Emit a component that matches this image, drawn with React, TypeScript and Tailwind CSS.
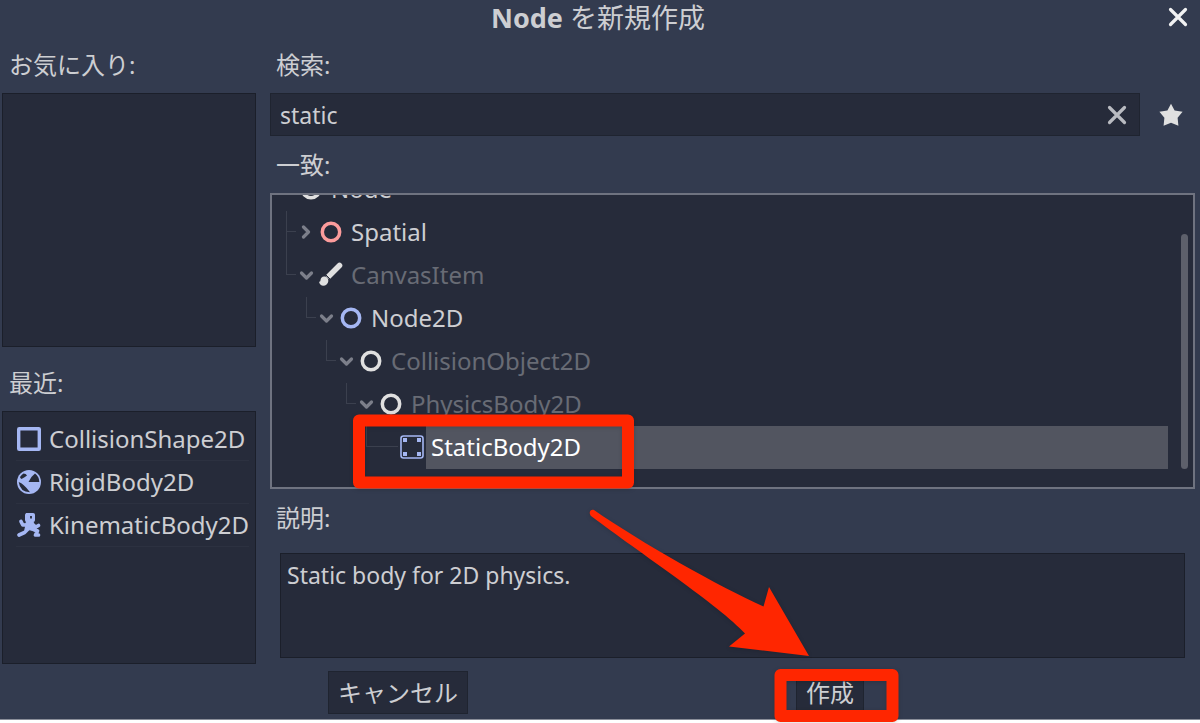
import React, { useState } from 'react';

type IconName = 'node' | 'spatial' | 'node2d' | 'brush' | 'static' | 'shape' | 'rigid' | 'kinematic';

interface TreeNode {
  name: string;
  icon: IconName;
  depth: number;
  arrow?: 'open' | 'closed';
  disabled?: boolean;
  hasSibling?: boolean;
}

const NODES: TreeNode[] = [
  { name: 'Spatial', icon: 'spatial', depth: 1, arrow: 'closed', hasSibling: true },
  { name: 'CanvasItem', icon: 'brush', depth: 1, arrow: 'open', disabled: true },
  { name: 'Node2D', icon: 'node2d', depth: 2, arrow: 'open' },
  { name: 'CollisionObject2D', icon: 'node', depth: 3, arrow: 'open', disabled: true },
  { name: 'PhysicsBody2D', icon: 'node', depth: 4, arrow: 'open', disabled: true },
  { name: 'StaticBody2D', icon: 'static', depth: 5 },
];

const RECENT: { name: string; icon: IconName }[] = [
  { name: 'CollisionShape2D', icon: 'shape' },
  { name: 'RigidBody2D', icon: 'rigid' },
  { name: 'KinematicBody2D', icon: 'kinematic' },
];

const NodeIcon: React.FC<{ name: IconName }> = ({ name }) => (
  <svg viewBox="0 0 24 24" className="w-6 h-6 shrink-0 overflow-visible" fill="none" aria-hidden="true">
    {name === 'node' && <circle cx="11" cy="11" r="8.7" stroke="#e0e0e0" strokeWidth="3.500" />}
    {name === 'spatial' && <circle cx="11" cy="11" r="8.7" stroke="#fc9c9c" strokeWidth="3.500" />}
    {name === 'node2d' && <circle cx="11" cy="11" r="8.7" stroke="#a5b7f3" strokeWidth="3.500" />}
    {name === 'brush' && (
      <>
        <path d="M8.500 12.500L19.500 1.500" stroke="#e0e0e0" strokeWidth="5.600" strokeLinecap="round" />
        <path d="M2.500 13.500l6 6" stroke="#262b3a" strokeWidth="7" />
        <path d="M4 12.500c2.700 0 4.600 2 4.300 4.700-.3 2.600-2.500 4.500-5.100 4.500-1.800 0-3.700-1-4.200-3.900 1.300.3 1.400-.6 1.500-1.700.4-2.200 1.600-3.600 3.500-3.600z" fill="#e0e0e0" />
        <path d="M5.500 10.500l5 5" stroke="#262b3a" strokeWidth="1" />
      </>
    )}
    {name === 'static' && (
      <>
        <rect x="1" y="0" width="22" height="22" rx="2.500" stroke="#a5b7f3" strokeWidth="1.600" />
        <path d="M3 2h4v4H3zM17 2h4v4h-4zM3 16h4v4H3zM17 16h4v4h-4z" fill="#a5b7f3" />
      </>
    )}
    {name === 'shape' && <rect x="1.700" y="1.700" width="20.600" height="20.600" rx=".5" stroke="#a5b7f3" strokeWidth="3.400" />}
    {name === 'rigid' && (
      <>
        <circle cx="12" cy="12" r="12" fill="#a5b7f3" />
        <path d="M11.500 12L22.300 12A10.300 10.300 0 0 0 18 3.600Q13.500 7 11.500 12z" fill="#262b3a" />
        <path d="M6.500 3.500Q9 3.500 10 5.500Q7 7.500 4.500 9Q3 8 3 7Q4.500 4.800 6.500 3.500z" fill="#262b3a" />
        <path d="M1.700 12Q4.500 13 6.500 15Q9.500 17.500 13 22.300Q3 22 1.700 12z" fill="#262b3a" />
      </>
    )}
    {name === 'kinematic' && (
      <g fill="#a5b7f3" stroke="#a5b7f3" strokeLinecap="round" strokeLinejoin="round">
        <rect x="8.500" y=".5" width="9" height="8" rx="1" strokeWidth="1" />
        <path d="M9.500 8h6l2.500 5.500-3.500 3.500-6.500-.5 1-4z" strokeWidth="1.200" />
        <path d="M4 8.500l1.800 3.500 4.700-.2M16 12l3 2 2.500-1.500M10.500 16.500l-3 3-5.500 2.500M14.500 15.500l5.500 2.500M20.500 18l-2 4h3" fill="none" strokeWidth="3.700" />
        <path d="M14 3v2.500" stroke="#262b3a" strokeWidth="1.800" strokeLinecap="butt" />
      </g>
    )}
  </svg>
);

const Cross: React.FC<{ color: string }> = ({ color }) => (
  <svg viewBox="0 0 20 20" className="w-5 h-5" aria-hidden="true">
    <path d="M2.500 2.500l15 15M17.500 2.500l-15 15" stroke={color} strokeWidth="3.200" strokeLinecap="round" />
  </svg>
);

const Arrow: React.FC<{ dir: 'open' | 'closed' }> = ({ dir }) => (
  <svg viewBox="0 0 16 16" className="w-4 h-4 ml-[3px] mr-[5px] shrink-0" fill="none" aria-hidden="true">
    <path
      d={dir === 'open' ? 'M2.500 5l5 5 5-5' : 'M4.500 2l5 5-5 5'}
      stroke="#7c7f8a"
      strokeWidth="3.200"
      strokeLinecap="round"
      strokeLinejoin="round"
    />
  </svg>
);

const TreeRow: React.FC<{ node: TreeNode; selected: boolean; onSelect: () => void }> = ({ node, selected, onSelect }) => (
  <li
    role="treeitem"
    aria-selected={selected}
    onClick={onSelect}
    className="flex items-center h-[43px] shrink-0"
    style={{ paddingLeft: node.depth * 20 - 6 }}
  >
    {/* Guide lines */}
    <div className={`self-stretch border-[#3b404e] ${node.hasSibling ? 'border-l' : ''} ${node.arrow ? 'w-[10px]' : 'w-[32px] mr-[2px]'}`}>
      <div className={`h-[21px] border-b border-[#3b404e] ${node.hasSibling ? '' : 'border-l'}`} />
    </div>
    {node.arrow && <Arrow dir={node.arrow} />}
    <NodeIcon name={node.icon} />
    <span
      className={`flex-1 h-full flex items-center ml-[2px] pl-[5px] pb-px ${
        selected ? 'bg-[#525560] text-white' : node.disabled ? 'text-[#686b75]' : 'text-[#cdced2]'
      }`}
    >
      {node.name}
    </span>
  </li>
);

const App: React.FC = () => {
  const [query, setQuery] = useState('static');
  const [selected, setSelected] = useState('StaticBody2D');

  return (
    <div className="h-screen bg-white pb-[3px] relative overflow-hidden font-['Noto_Sans','Noto_Sans_CJK_JP',sans-serif] text-2xl leading-8 text-[#cdced2]">
      <div role="dialog" aria-labelledby="title" className="h-full flex flex-col bg-[#333b4f] border-b border-[#8a8e99]">
        <header className="h-[37px] flex items-start shrink-0 pl-7 pr-3">
          <h1 id="title" className="flex-1 text-center text-[27px] leading-9">
            <b>Node</b> を新規作成
          </h1>
          <button aria-label="閉じる" className="pt-[7px]"><Cross color="#f2f2f3" /></button>
        </header>

        <main className="flex-1 min-h-0 flex gap-[14px] pl-[2px] pr-[5px]">
          <aside className="w-[254px] shrink-0 flex flex-col">
            <h2 className="h-14 flex items-center pl-[7px]">お気に入り:</h2>
            <ul className="flex-1 bg-[#262b3a] border border-[#1b1f2a] pt-[6px]" />
            <h2 className="h-16 pt-2 flex items-center pl-[7px]">最近:</h2>
            <ul className="flex-1 bg-[#262b3a] border border-[#1b1f2a] pl-[13px] pr-[6px] pt-[6px]">
              {RECENT.map(item => (
                <li key={item.name} className="h-[43px] flex items-center gap-2 pl-px border-b border-[#2c3140] whitespace-nowrap">
                  <NodeIcon name={item.icon} />
                  <span>{item.name}</span>
                </li>
              ))}
            </ul>
          </aside>

          <section className="flex-1 min-w-0 flex flex-col">
            <label htmlFor="search" className="h-14 flex items-center pl-[6px]">検索:</label>
            <div className="h-[43px] flex items-center">
              <div className="flex-1 h-full flex items-center bg-[#262b3a] border border-[#1f2430] pl-[9px] pr-[12px]">
                <input
                  id="search"
                  type="text"
                  value={query}
                  onChange={e => setQuery(e.target.value)}
                  className="flex-1 min-w-0 bg-transparent outline-none text-[23px]"
                />
                <button aria-label="クリア" onClick={() => setQuery('')}><Cross color="#b9bbc1" /></button>
              </div>
              <button aria-label="お気に入りに追加" className="ml-[19px] mr-3">
                <svg viewBox="0 0 24 24" className="w-6 h-6" aria-hidden="true">
                  <path d="M12 .8l3.600 6.700 8 1.200-5 6 .8 8.100L12 19.800l-7.400 3 .8-8.100-5-6 8-1.200z" fill="#e0e0e0" />
                </svg>
              </button>
            </div>

            <h2 className="h-[57px] flex items-center pl-[6px]">一致:</h2>
            <div className="flex-1 min-h-0 flex bg-[#262b3a] border-2 border-[#6f7380] overflow-hidden">
              <ul role="tree" className="flex-1 min-w-0 flex flex-col justify-end pb-[18px]">
                <li role="treeitem" className="flex items-center h-[43px] shrink-0 pl-7">
                  <NodeIcon name="node" />
                  <span className="pl-[7px] pb-px">Node</span>
                </li>
                {NODES.map(node => (
                  <TreeRow key={node.name} node={node} selected={node.name === selected} onSelect={() => setSelected(node.name)} />
                ))}
              </ul>
              <div className="w-[7px] rounded-full bg-[#5d606b] ml-[13px] mr-[5px] mt-[39px] mb-[18px]" />
            </div>

            <h2 className="h-16 flex items-center pl-[6px] pb-[6px]">説明:</h2>
            <div className="h-[105px] mx-[10px] mb-[6px] bg-[#262b3a] border border-[#1b1f2a] px-[6px] py-[5px] text-[23px]">
              Static body for 2D physics.
            </div>
          </section>
        </main>

        <footer className="flex justify-evenly pt-[7px] pb-[5px] pr-2 shrink-0">
          <button className="h-[43px] px-[9px] bg-[#262b3a] border border-[#1f2430]">キャンセル</button>
          <button className="h-[43px] px-[9px] bg-[#262b3a] border border-[#1f2430]">作成</button>
        </footer>
      </div>

      {/* Callouts drawn over the dialog */}
      <svg viewBox="0 0 1200 723" className="absolute inset-0 w-full h-full pointer-events-none drop-shadow-sm" aria-hidden="true">
        <g fill="none" stroke="#ff2600" strokeWidth="12" strokeLinejoin="round">
          <rect x="359" y="420.500" width="269" height="62" />
          <rect x="780.500" y="675" width="112" height="41" />
        </g>
        <path
          d="M594 510C640 542 720 587 763.500 606.500L769 587L809 656L729 646.500L745 633.500C720 606 640 553 591 516C588 512 591 508.500 594 510z"
          fill="#ff2600"
        />
      </svg>
    </div>
  );
};

export default App;
